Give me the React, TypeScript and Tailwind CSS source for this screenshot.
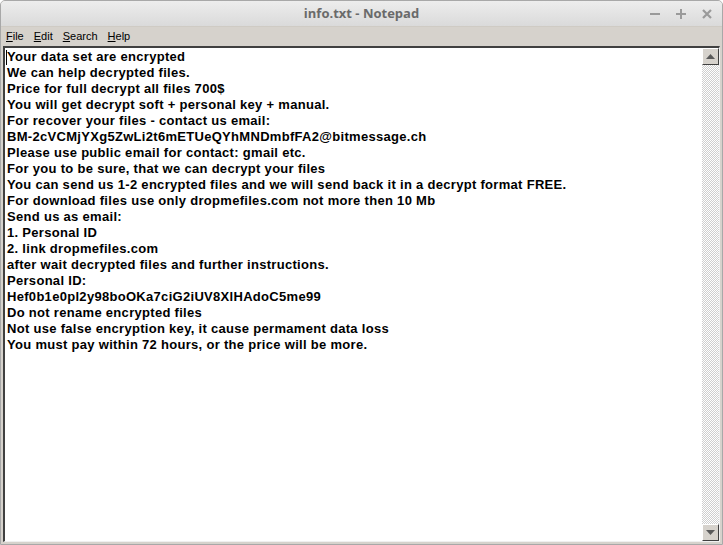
const lines = [
  "Your data set are encrypted",
  "We can help decrypted files.",
  "Price for full decrypt all files 700$",
  "You will get decrypt soft + personal key + manual.",
  "For recover your files - contact us email:",
  "BM-2cVCMjYXg5ZwLi2t6mETUeQYhMNDmbfFA2@bitmessage.ch",
  "Please use public email for contact: gmail etc.",
  "For you to be sure, that we can decrypt your files",
  "You can send us 1-2 encrypted files and we will send back it in a decrypt format FREE.",
  "For download files use only dropmefiles.com not more then 10 Mb",
  "Send us as email:",
  "1. Personal ID",
  "2. link dropmefiles.com",
  "after wait decrypted files and further instructions.",
  "Personal ID:",
  "Hef0b1e0pl2y98boOKa7ciG2iUV8XlHAdoC5me99",
  "Do not rename encrypted files",
  "Not use false encryption key, it cause permament data loss",
  "You must pay within 72 hours, or the price will be more.",
];

const menus = [
  ["F", "ile"],
  ["E", "dit"],
  ["S", "earch"],
  ["H", "elp"],
];

const checker = {
  backgroundImage:
    "repeating-conic-gradient(#cfcfcf 0% 25%, #ffffff 0% 50%)",
  backgroundSize: "2px 2px",
};

const App = () => {
  return (
    <div className="w-[723px] h-[545px] bg-[#d6d2cc] flex flex-col overflow-hidden rounded-t-[5px] border border-[#a8a8a8]">
      {/* title bar */}
      <div className="h-[26px] shrink-0 relative flex items-center justify-center bg-gradient-to-b from-[#ededed] to-[#dadada] border-b border-[#cfcbc4]">
        <span className="text-[13px] font-bold text-[#6a6a6a] font-['Open_Sans',sans-serif]">
          info.txt - Notepad
        </span>
        <div className="absolute right-[10px] top-0 h-full flex items-center gap-[16px] text-[#9a9a9a]">
          <svg width="10" height="10" viewBox="0 0 10 10">
            <rect x="0" y="4" width="10" height="2" fill="currentColor" />
          </svg>
          <svg width="10" height="10" viewBox="0 0 10 10">
            <rect x="0" y="4" width="10" height="2" fill="currentColor" />
            <rect x="4" y="0" width="2" height="10" fill="currentColor" />
          </svg>
          <svg width="10" height="10" viewBox="0 0 10 10">
            <path d="M1 1 L9 9 M9 1 L1 9" stroke="currentColor" strokeWidth="2.2" />
          </svg>
        </div>
      </div>

      {/* menu bar */}
      <div className="h-[19px] shrink-0 flex items-center gap-[10px] pl-[5px] text-[11px] text-black font-['Liberation_Sans',Arial,sans-serif]">
        {menus.map(([k, rest]) => (
          <span key={k}>
            <span className="underline">{k}</span>
            {rest}
          </span>
        ))}
      </div>

      {/* edit area */}
      <div className="flex-1 mx-[2px] mb-[2px] flex border-t-2 border-l-2 border-t-[#404040] border-l-[#404040] border-b border-r border-b-[#f0f0f0] border-r-[#f0f0f0] bg-white">
        <div className="flex-1 pl-[2px] pt-[1px] text-[13px] leading-[16px] font-bold tracking-[0.3px] text-black font-['Liberation_Sans',Arial,sans-serif] whitespace-pre relative">
          <span className="absolute left-[1px] top-[2px] w-px h-[15px] bg-black" />
          {lines.map((l, i) => (
            <div key={i}>{l}</div>
          ))}
        </div>
        <div className="w-[17px] shrink-0 flex flex-col" style={checker}>
          <div className="h-[17px] flex items-center justify-center bg-[#d6d2cc] border-r border-b border-[#404040] border-t border-l border-t-white border-l-white">
            <svg width="9" height="5" viewBox="0 0 9 5">
              <path d="M0 5 L4.5 0 L9 5 Z" fill="#5a5a5a" />
            </svg>
          </div>
          <div className="flex-1" />
          <div className="h-[17px] flex items-center justify-center bg-[#d6d2cc] border-r border-b border-[#404040] border-t border-l border-t-white border-l-white">
            <svg width="9" height="5" viewBox="0 0 9 5">
              <path d="M0 0 L4.5 5 L9 0 Z" fill="#5a5a5a" />
            </svg>
          </div>
        </div>
      </div>
    </div>
  );
};

export default App;
